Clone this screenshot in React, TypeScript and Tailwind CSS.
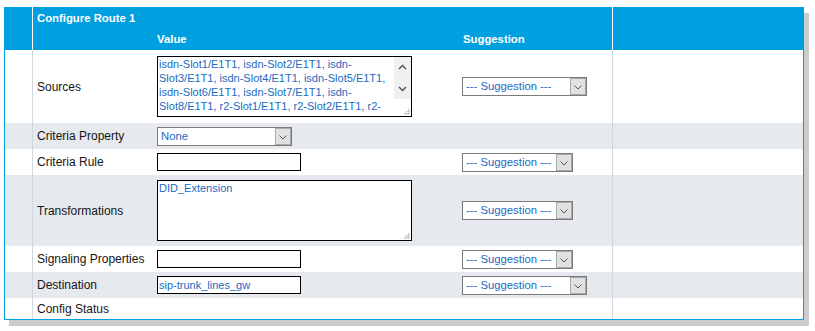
import React from 'react';

const sourceLines = [
  'isdn-Slot1/E1T1, isdn-Slot2/E1T1, isdn-',
  'Slot3/E1T1, isdn-Slot4/E1T1, isdn-Slot5/E1T1,',
  'isdn-Slot6/E1T1, isdn-Slot7/E1T1, isdn-',
  'Slot8/E1T1, r2-Slot1/E1T1, r2-Slot2/E1T1, r2-',
];

function Chevron({ up = false }: { up?: boolean }) {
  return (
    <svg width="9" height="6" viewBox="0 0 9 6" className="block">
      <path d={up ? 'M1 5 L4.5 1.5 L8 5' : 'M1 1 L4.5 4.5 L8 1'} fill="none" stroke="#505050" strokeWidth="1.4" />
    </svg>
  );
}

function Grip() {
  return (
    <svg width="7" height="7" viewBox="0 0 7 7" className="block">
      <rect x="5" y="1" width="1.5" height="1.5" fill="#b8b8b8" />
      <rect x="3" y="3" width="1.5" height="1.5" fill="#b8b8b8" />
      <rect x="5" y="3" width="1.5" height="1.5" fill="#b8b8b8" />
      <rect x="1" y="5" width="1.5" height="1.5" fill="#b8b8b8" />
      <rect x="3" y="5" width="1.5" height="1.5" fill="#b8b8b8" />
      <rect x="5" y="5" width="1.5" height="1.5" fill="#b8b8b8" />
    </svg>
  );
}

function Select({ value, width }: { value: string; width: string }) {
  return (
    <div className={`flex h-[19px] border border-[#7a7a7a] bg-white ${width}`}>
      <span className="flex-1 truncate pl-[3px] text-[11.3px] leading-[17px] text-[#1a6bbf]">{value}</span>
      <span className="flex w-[16px] items-center justify-center border border-[#a9a9a9] bg-[#e1e1e1]">
        <svg width="8" height="5" viewBox="0 0 8 5" className="mt-[2px] block">
          <path d="M0.5 0.5 L4 4 L7.5 0.5" fill="none" stroke="#555" strokeWidth="1" />
        </svg>
      </span>
    </div>
  );
}

function Input({ value = '' }: { value?: string }) {
  return (
    <div className="h-[18px] w-[144px] border border-black bg-white pl-[1px] text-[11px] leading-[16px] text-[#1a6bbf]">
      {value}
    </div>
  );
}

function Row({
  label,
  gray,
  className = '',
  value,
  suggestion,
}: {
  label: string;
  gray?: boolean;
  className?: string;
  value?: React.ReactNode;
  suggestion?: React.ReactNode;
}) {
  return (
    <div className={`flex ${gray ? 'bg-[#e6e9ed]' : 'bg-white'}`}>
      <div className="w-[28px] border-r border-[#d0d8e0]" />
      <div className={`grid w-[580px] grid-cols-[124px_305px_1fr] items-center border-r border-[#d0d8e0] ${className}`}>
        <div className="pl-[4px] text-[12px] text-[#161616]">{label}</div>
        <div>{value}</div>
        <div>{suggestion}</div>
      </div>
      <div className="flex-1" />
    </div>
  );
}

export default function App() {
  return (
    <div className="min-h-screen bg-white pl-[4px] pt-[7px] font-['Liberation_Sans',Arial,sans-serif]">
      {/* blue frame: the 1px padding shows as the outline */}
      <div className="w-[800px] bg-[#009fdf] px-px pb-px shadow-[5px_6px_0_#cccccc]">
        <div className="flex text-white">
          <div className="w-[28px] border-r border-white" />
          <div className="w-[580px] border-r border-white">
            <div className="flex h-[22px] items-center pl-[4px] text-[11.33px] font-bold">Configure Route 1</div>
            <div className="grid h-[21px] grid-cols-[124px_305px_1fr] items-center text-[11.33px] font-bold">
              <div />
              <div>Value</div>
              <div className="pl-[1px]">Suggestion</div>
            </div>
          </div>
          <div className="flex-1" />
        </div>

        <Row
          label="Sources"
          className="py-[6px]"
          value={
            <div className="flex h-[61px] w-[255px] border border-black bg-white">
              <div className="flex-1 overflow-hidden pl-[1px] text-[11px] leading-[14px] text-[#1a6bbf]">
                {sourceLines.map((l) => (
                  <div key={l} className="whitespace-nowrap">
                    {l}
                  </div>
                ))}
              </div>
              <div className="flex w-[17px] flex-col">
                <div className="flex h-[42px] flex-col items-center justify-between bg-[#f0f0f0] py-[7px]">
                  <Chevron up />
                  <Chevron />
                </div>
                <div className="flex flex-1 items-end justify-end pb-[1px] pr-[1px]">
                  <Grip />
                </div>
              </div>
            </div>
          }
          suggestion={<Select value="--- Suggestion ---" width="w-[125px]" />}
        />
        <Row label="Criteria Property" gray className="h-[26px]" value={<Select value="None" width="w-[135px]" />} />
        <Row
          label="Criteria Rule"
          className="h-[26px]"
          value={<Input />}
          suggestion={<Select value="--- Suggestion ---" width="w-[111px]" />}
        />
        <Row
          label="Transformations"
          gray
          className="py-[5px]"
          value={
            <div className="relative h-[61px] w-[255px] border border-black bg-white pl-[1px] text-[11px] leading-[14px] text-[#1a6bbf]">
              DID_Extension
              <span className="absolute bottom-[1px] right-[1px]">
                <Grip />
              </span>
            </div>
          }
          suggestion={<Select value="--- Suggestion ---" width="w-[111px]" />}
        />
        <Row
          label="Signaling Properties"
          className="h-[26px]"
          value={<Input />}
          suggestion={<Select value="--- Suggestion ---" width="w-[111px]" />}
        />
        <Row
          label="Destination"
          gray
          className="h-[26px]"
          value={<Input value="sip-trunk_lines_gw" />}
          suggestion={<Select value="--- Suggestion ---" width="w-[125px]" />}
        />
        <Row label="Config Status" className="h-[21px]" />
      </div>
    </div>
  );
}
